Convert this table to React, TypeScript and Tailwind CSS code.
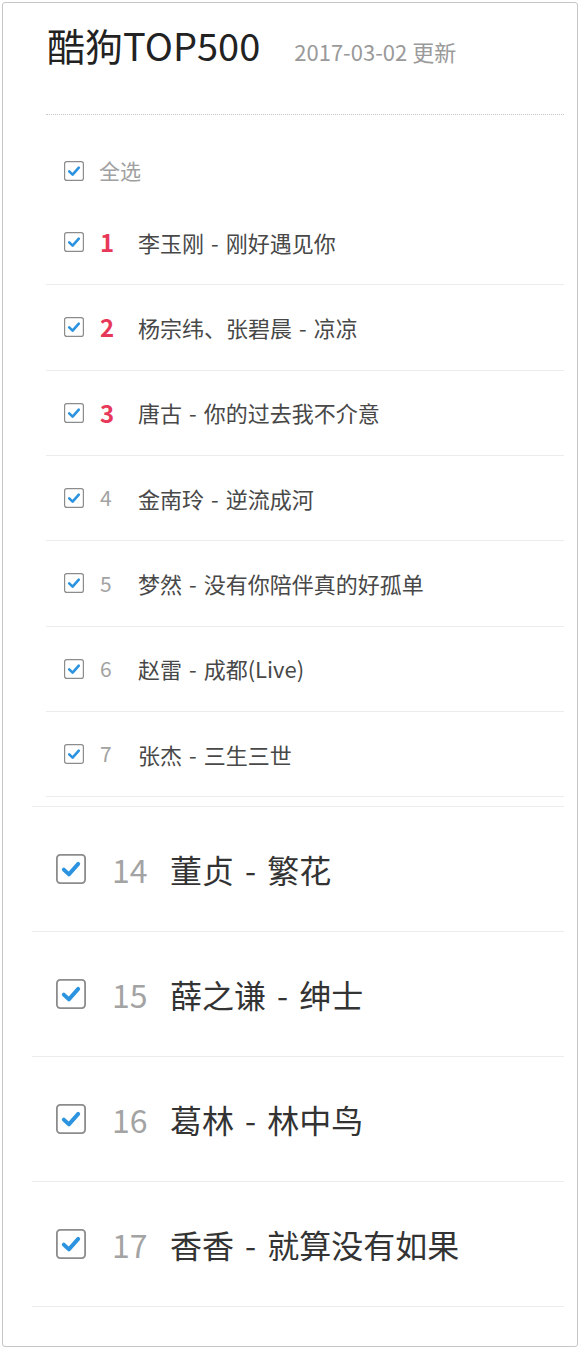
import React from "react";

const small = [
  { n: 1, a: "李玉刚", b: "刚好遇见你", red: true },
  { n: 2, a: "杨宗纬、张碧晨", b: "凉凉", red: true },
  { n: 3, a: "唐古", b: "你的过去我不介意", red: true },
  { n: 4, a: "金南玲", b: "逆流成河", red: false },
  { n: 5, a: "梦然", b: "没有你陪伴真的好孤单", red: false },
  { n: 6, a: "赵雷", b: "成都(Live)", red: false },
  { n: 7, a: "张杰", b: "三生三世", red: false },
];

const big = [
  { n: 14, a: "董贞", b: "繁花" },
  { n: 15, a: "薛之谦", b: "绅士" },
  { n: 16, a: "葛林", b: "林中鸟" },
  { n: 17, a: "香香", b: "就算没有如果" },
];

function Check({ size }: { size: number }) {
  return (
    <svg width={size} height={size} viewBox="0 0 20 20" className="shrink-0">
      <rect x="0.6" y="0.6" width="18.8" height="18.8" rx="2.2" fill="#fff" stroke="#8c8c8c" strokeWidth="1.2" />
      <path d="M5.2 10.4 L8.6 13.6 L14.8 6.6" fill="none" stroke="#2b93df" strokeWidth="2.6" strokeLinecap="round" strokeLinejoin="round" />
    </svg>
  );
}

export default function App() {
  return (
    <div className="bg-white p-[2px]" style={{ fontFamily: '"Noto Sans CJK SC", "Noto Sans", sans-serif' }}>
      <div className="h-[1345px] border border-[#c6c6c6] rounded-[3px] overflow-hidden">
        <div className="pl-[44px] pt-[18px] flex items-baseline gap-[34px]">
          <span className="text-[38px] leading-[48px] text-[#222]">酷狗TOP500</span>
          <span className="text-[22px] text-[#9a9a9a]">2017-03-02 更新</span>
        </div>
        <div className="ml-[43px] mr-[13px] mt-[45px] border-t border-dotted border-[#c8c8c8]" />
        <div className="ml-[43px] mr-[13px] mt-[42px] h-[28px] pl-[18px] flex items-center gap-[15px]">
          <Check size={20} />
          <span className="text-[21px] text-[#a0a0a0]">全选</span>
        </div>
        <div className="ml-[43px] mr-[13px] mt-[15px]">
          {small.map((r) => (
            <div key={r.n} className="h-[85.33px] border-b border-[#ececec] flex items-center pl-[18px]">
              <Check size={20} />
              <span
                className={
                  r.red
                    ? "ml-[16px] w-[38px] text-[24px] font-bold text-[#e8385a]"
                    : "ml-[16px] w-[38px] text-[21px] text-[#a3a3a3]"
                }
              >
                {r.n}
              </span>
              <span className="text-[22px] text-[#484848]">
                {r.a}
                <span className="px-[7px]">-</span>
                {r.b}
              </span>
            </div>
          ))}
        </div>
        <div className="ml-[29px] mr-[13px] mt-[9px] border-t border-[#ececec]">
          {big.map((r) => (
            <div key={r.n} className="h-[125px] border-b border-[#ececec] flex items-center pl-[24px]">
              <Check size={30} />
              <span className="ml-[26px] w-[58px] text-[32px] text-[#a3a3a3]">{r.n}</span>
              <span className="text-[32px] text-[#333]">
                {r.a}
                <span className="px-[11px]">-</span>
                {r.b}
              </span>
            </div>
          ))}
        </div>
      </div>
    </div>
  );
}
